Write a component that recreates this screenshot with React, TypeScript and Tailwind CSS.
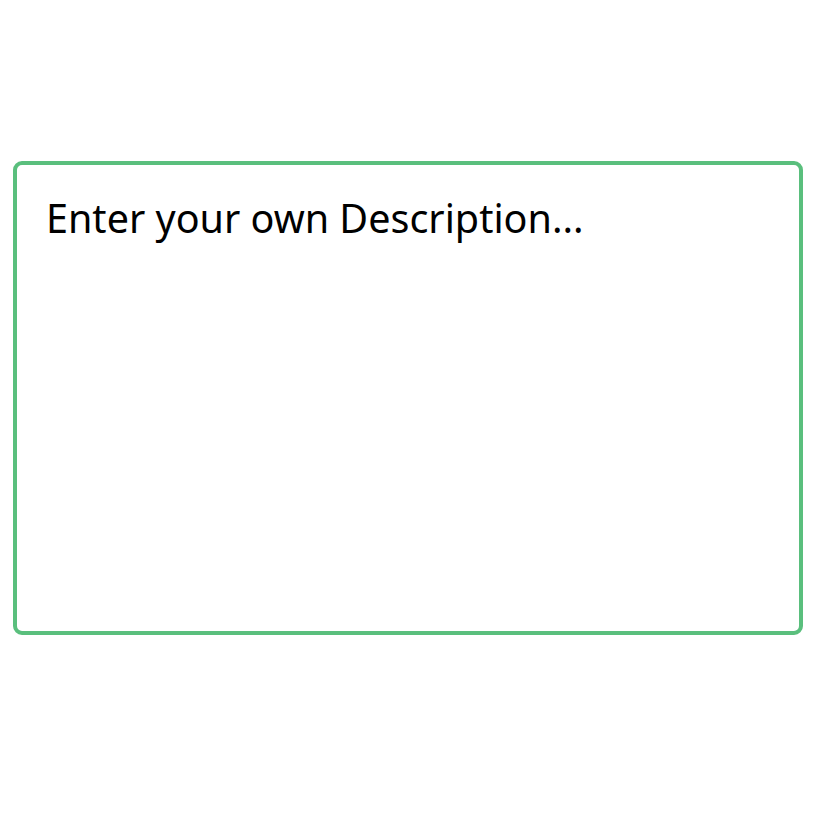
export default function App() {
  return (
    <div className="min-h-screen bg-white flex flex-col pt-[161px] px-[13px]">
      <textarea
        placeholder="Enter your own Description..."
        className="w-[790px] h-[474px] resize-none rounded-[9px] border-4 border-[#5abf7d] bg-white pl-[29px] pr-[27px] pt-[27px] text-[39.5px] leading-[1.362] text-black placeholder:text-black outline-none"
        style={{ fontFamily: '"Noto Sans", sans-serif' }}
      />
    </div>
  );
}
